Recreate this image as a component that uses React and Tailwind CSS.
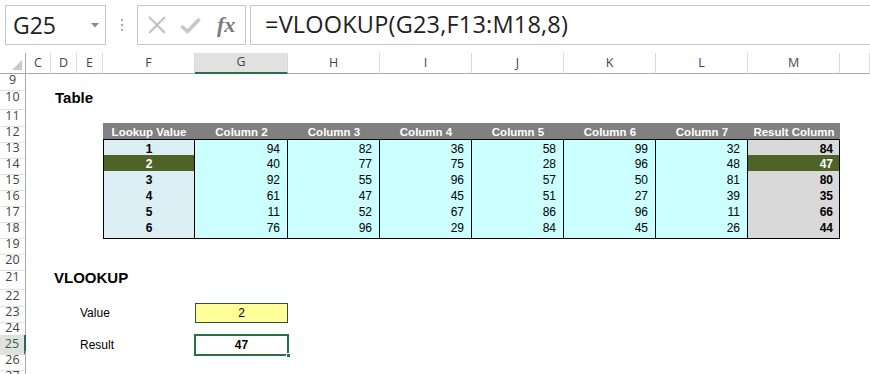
import React from 'react';

const GRID = 'grid grid-cols-[26px_25px_26px_26px_92px_93px_92px_92px_92px_92px_92px_92px_1fr]';
const UI = "font-['Open_Sans',sans-serif]";
const CELL = "font-['Liberation_Sans',Arial,sans-serif] text-[12px] text-black";

const HEADERS = ['Lookup Value', 'Column 2', 'Column 3', 'Column 4', 'Column 5', 'Column 6', 'Column 7', 'Result Column'];
const DATA = [
  [1, 94, 82, 36, 58, 99, 32, 84],
  [2, 40, 77, 75, 28, 96, 48, 47],
  [3, 92, 55, 96, 57, 50, 81, 80],
  [4, 61, 47, 45, 51, 27, 39, 35],
  [5, 11, 52, 67, 86, 96, 11, 66],
  [6, 76, 96, 29, 84, 45, 26, 44],
];

const Row = ({ n, h = 'h-[16px]', active, children }) => (
  <div className={`${GRID} ${h}`}>
    <div
      className={`${UI} flex items-center justify-center border-b border-b-[#e1e1e1] text-[12.5px] ${
        active ? 'bg-[#e1e1e1] border-r-2 border-r-[#217346] text-[#2f5f48]' : 'border-r border-r-[#ababab] text-[#444]'
      }`}
    >
      {n}
    </div>
    {children}
  </div>
);

const FormulaBar = () => (
  <div className="flex h-[53px] pt-[5px] pl-[5px]">
    <div className="flex h-[40px] w-[101px] items-center justify-between border border-[#c6c6c6] pl-[7px] pr-[6px]">
      <span className={`${UI} text-[23px] text-[#222]`}>G25</span>
      <svg width="8" height="5" viewBox="0 0 8 5">
        <path d="M0 0 L8 0 L4 4.5 Z" fill="#8a8a8a" />
      </svg>
    </div>
    <div className="flex h-[40px] w-[31px] flex-col items-center justify-center gap-[3px]">
      <span className="h-[2px] w-[2px] bg-[#a8a8a8]" />
      <span className="h-[2px] w-[2px] bg-[#a8a8a8]" />
      <span className="h-[2px] w-[2px] bg-[#a8a8a8]" />
    </div>
    <div className="flex h-[40px] w-[109px] items-center border border-[#c6c6c6] pl-[9px]">
      <svg width="20" height="20" viewBox="0 0 20 20">
        <path d="M2 2 L18 18 M18 2 L2 18" stroke="#c2c2c2" strokeWidth="2.2" />
      </svg>
      <svg className="ml-[13px]" width="21" height="17" viewBox="0 0 21 17">
        <path d="M1.5 9 L7.5 14.5 L19.5 2" stroke="#c8c8c8" strokeWidth="3.6" fill="none" />
      </svg>
      <span className="ml-[16px] font-['Liberation_Serif',serif] text-[22px] font-bold italic leading-none text-[#7a7a7a]">
        fx
      </span>
    </div>
    <div className="ml-[4px] flex h-[40px] flex-1 items-center border border-r-0 border-[#c6c6c6] pl-[14px]">
      <span className={`${UI} text-[23.5px] tracking-[0.2px] text-[#222]`}>=VLOOKUP(G23,F13:M18,8)</span>
    </div>
  </div>
);

const ColumnHeaders = () => {
  const cols = ['C', 'D', 'E', 'F', 'G', 'H', 'I', 'J', 'K', 'L', 'M', ''];
  return (
    <div className={`${GRID} h-[18px]`}>
      <div className="relative border-b border-r border-[#ababab]">
        <svg className="absolute bottom-[3px] right-[3px]" width="10" height="10" viewBox="0 0 10 10">
          <path d="M10 0 L10 10 L0 10 Z" fill="#c9c9c9" />
        </svg>
      </div>
      {cols.map((c) => (
        <div
          key={c || 'N'}
          className={`${UI} flex items-center justify-center border-r border-r-[#dadada] text-[12.5px] text-[#444] ${
            c === 'G' ? 'bg-[#e1e1e1] border-b-2 border-b-[#217346]' : 'border-b border-b-[#ababab]'
          }`}
        >
          {c}
        </div>
      ))}
    </div>
  );
};

export default function App() {
  return (
    <div className="h-[374px] w-[870px] overflow-hidden bg-white">
      <FormulaBar />
      <ColumnHeaders />
      <Row n={9} />
      <Row n={10} h="h-[20px]">
        <div className="col-span-4 col-start-3 flex items-center pl-[4px] font-['Liberation_Sans',Arial,sans-serif] text-[15px] font-bold">
          Table
        </div>
      </Row>
      <Row n={11} />
      <Row n={12}>
        <div className="col-span-3" />
        {HEADERS.map((t) => (
          <div
            key={t}
            className="flex items-center justify-center bg-[#808080] font-['Liberation_Sans',Arial,sans-serif] text-[11.5px] font-bold text-white"
          >
            {t}
          </div>
        ))}
      </Row>
      {DATA.map((r, i) => (
        <Row key={i} n={13 + i}>
          <div className="col-span-3" />
          {r.map((v, j) => {
            const hit = r[0] === 2 && (j === 0 || j === 7);
            let tone = 'bg-[#ccffff] justify-end pr-[7px]';
            if (j === 0) tone = 'bg-[#daeef3] justify-center font-bold border-l';
            if (j === 7) tone = 'bg-[#d9d9d9] justify-end pr-[6px] font-bold';
            if (hit) tone += ' !bg-[#4f6228] !text-white';
            return (
              <div
                key={j}
                className={`${CELL} flex items-center border-b border-r border-black ${i === 0 ? 'border-t' : ''} ${tone}`}
              >
                {v}
              </div>
            );
          })}
        </Row>
      ))}
      <Row n={19} />
      <Row n={20} />
      <Row n={21} h="h-[20px]">
        <div className="col-span-4 col-start-3 flex items-center pl-[3px] font-['Liberation_Sans',Arial,sans-serif] text-[15px] font-bold">
          VLOOKUP
        </div>
      </Row>
      <Row n={22} />
      <Row n={23}>
        <div className={`${CELL} col-span-2 col-start-4 flex items-center pl-[3px]`}>Value</div>
        <div className={`${CELL} flex items-center justify-center border border-[#2d4f43] bg-[#ffff99] text-[#333]`}>2</div>
      </Row>
      <Row n={24} />
      <Row n={25} active>
        <div className={`${CELL} col-span-2 col-start-4 flex items-center pl-[3px]`}>Result</div>
        <div className={`${CELL} relative flex items-center justify-center font-bold`}>
          47
          <div className="absolute -inset-[1px] border-2 border-[#217346]" />
          <div className="absolute -bottom-[3px] -right-[3px] h-[5px] w-[5px] border border-white bg-[#217346]" />
        </div>
      </Row>
      <Row n={26} />
      <Row n={27} />
    </div>
  );
}
